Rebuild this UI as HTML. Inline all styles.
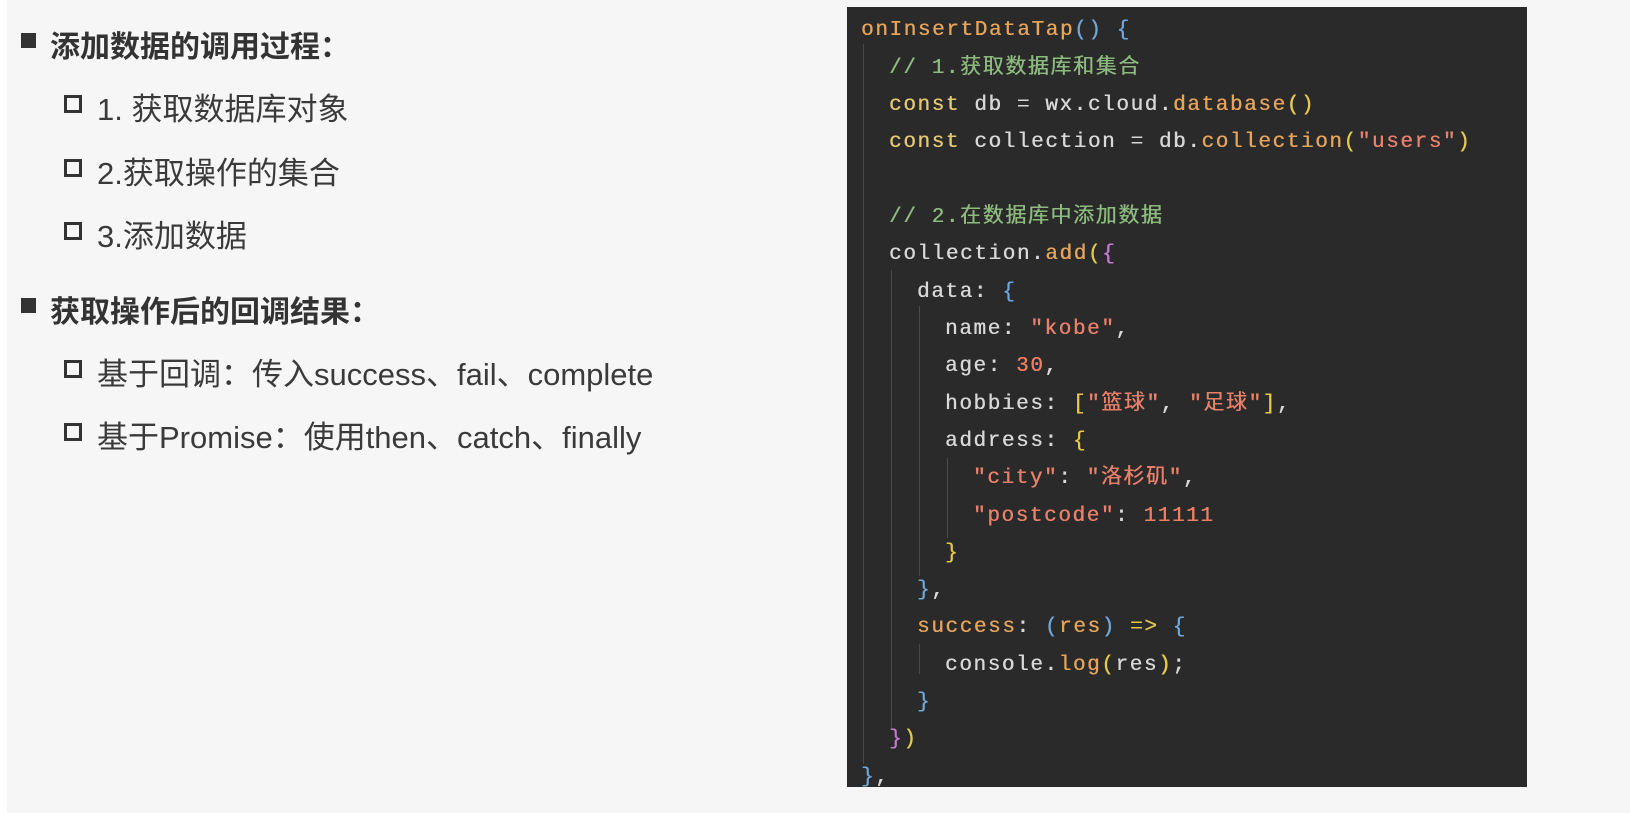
<!DOCTYPE html>
<html><head><meta charset="utf-8"><style>
body{margin:0;width:1630px;height:821px;background:#fff;position:relative;overflow:hidden;font-family:"Liberation Sans","Noto Sans CJK SC",sans-serif;}
#left{position:absolute;left:7px;top:0;width:1623px;height:813px;background:#f6f6f6;}
.h{position:absolute;left:43px;font-size:30px;font-weight:bold;color:#333;}
.h:before{content:"";position:absolute;left:-29px;top:11px;width:15px;height:15px;background:#333;}
.s{position:absolute;left:90px;font-size:31px;color:#3a3a3a;}
.s:before{content:"";position:absolute;left:-33px;top:11px;width:12px;height:12px;border:3px solid #333;}
#code{position:absolute;left:847px;top:7px;width:680px;height:780px;background:#2a2a2a;}
.l{position:absolute;font-family:"Liberation Mono","Noto Sans CJK SC",monospace;font-size:21px;letter-spacing:1.6px;color:#d8d8d8;white-space:pre;line-height:26px;text-shadow:0.4px 0 0 currentColor;}
.g{position:absolute;width:1px;background:#4a4a4a;}
.k{color:#e6c86e}.f{color:#e6a45a}.c{color:#8dbb7e}.s2{color:#e8806a}.n{color:#ef7f62}.b{color:#6fa6dc}.p{color:#c47ad0}.y{color:#e6c84a}
</style></head><body>
<div id="left">
<div class="h" style="top:22px">添加数据的调用过程：</div>
<div class="s" style="top:84px">1. 获取数据库对象</div>
<div class="s" style="top:148px">2.获取操作的集合</div>
<div class="s" style="top:211px">3.添加数据</div>
<div class="h" style="top:287px">获取操作后的回调结果：</div>
<div class="s" style="top:349px">基于回调：传入success、fail、complete</div>
<div class="s" style="top:412px">基于Promise：使用then、catch、finally</div>
</div>
<div id="code">
<div class="g" style="left:16px;top:37px;height:720px"></div>
<div class="g" style="left:44px;top:263px;height:460px"></div>
<div class="g" style="left:72px;top:299px;height:270px"></div>
<div class="g" style="left:100px;top:451px;height:80px"></div>
<div class="g" style="left:72px;top:637px;height:30px"></div>
</div>
<div class="l" style="left:861px;top:18px"><span class="f">onInsertDataTap</span><span class="b">() {</span></div>
<div class="l c" style="left:889px;top:56px">// 1.获取数据库和集合</div>
<div class="l" style="left:889px;top:93px"><span class="k">const</span> db = wx.cloud.<span class="f">database</span><span class="y">()</span></div>
<div class="l" style="left:889px;top:130px"><span class="k">const</span> collection = db.<span class="f">collection</span><span class="y">(</span><span class="s2">"users"</span><span class="y">)</span></div>
<div class="l c" style="left:889px;top:205px">// 2.在数据库中添加数据</div>
<div class="l" style="left:889px;top:242px">collection.<span class="f">add</span><span class="y">(</span><span class="p">{</span></div>
<div class="l" style="left:917px;top:280px">data: <span class="b">{</span></div>
<div class="l" style="left:945px;top:317px">name: <span class="s2">"kobe"</span>,</div>
<div class="l" style="left:945px;top:354px">age: <span class="n">30</span>,</div>
<div class="l" style="left:945px;top:392px">hobbies: <span class="y">[</span><span class="s2">"篮球"</span>, <span class="s2">"足球"</span><span class="y">]</span>,</div>
<div class="l" style="left:945px;top:429px">address: <span class="y">{</span></div>
<div class="l" style="left:973px;top:466px"><span class="s2">"city"</span>: <span class="s2">"洛杉矶"</span>,</div>
<div class="l" style="left:973px;top:504px"><span class="s2">"postcode"</span>: <span class="n">11111</span></div>
<div class="l y" style="left:945px;top:541px">}</div>
<div class="l" style="left:917px;top:578px"><span class="b">}</span>,</div>
<div class="l" style="left:917px;top:615px"><span class="f">success</span>: <span class="b">(</span><span class="f">res</span><span class="b">)</span> <span class="y">=&gt;</span> <span class="b">{</span></div>
<div class="l" style="left:945px;top:653px">console.<span class="f">log</span><span class="y">(</span>res<span class="y">)</span>;</div>
<div class="l b" style="left:917px;top:690px">}</div>
<div class="l" style="left:889px;top:727px"><span class="p">}</span><span class="y">)</span></div>
<div class="l" style="left:861px;top:765px"><span class="b">}</span>,</div>
</body></html>
